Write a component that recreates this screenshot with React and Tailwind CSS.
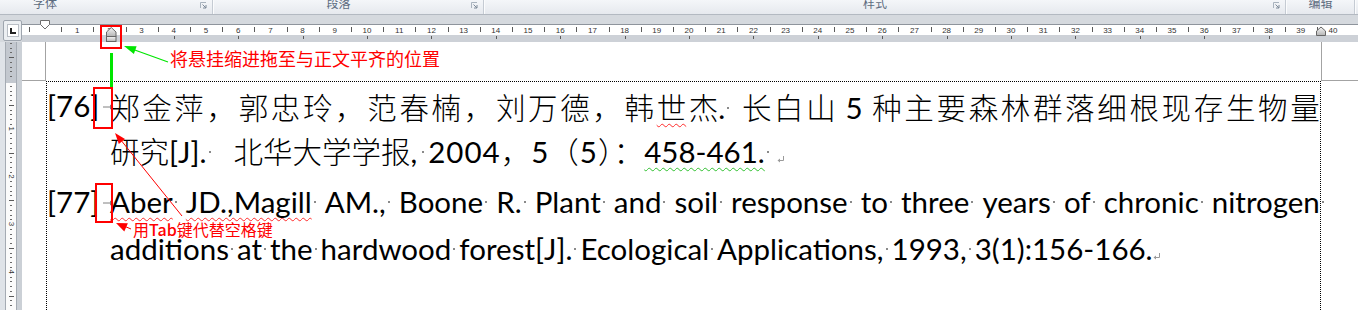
import React from 'react';

const CM = 32.2;
const Z = 23; // ruler-local x of the 0 mark
const CJK = "font-['Noto_Sans_CJK_SC',sans-serif] font-light";
const RED_WAVE = 'underline decoration-wavy decoration-[#ff2b2b] decoration-1 underline-offset-[4px] [text-decoration-skip-ink:none]';
const GREEN_WAVE = 'underline decoration-wavy decoration-[#2fbf2f] decoration-1 underline-offset-[4px] [text-decoration-skip-ink:none]';

function C({ children, className = '' }) {
  return <span className={`${CJK} ${className}`}>{children}</span>;
}

// formatting mark for a space
function Sp({ className = 'w-[8px] pl-[2px]' }) {
  return (
    <span className={`inline-flex ${className} align-[10px]`}>
      <span className="w-[2px] h-[2px] bg-[#8a8a8a]" />
    </span>
  );
}

function TabMark() {
  return (
    <svg width="11" height="6" viewBox="0 0 11 6" className="inline-block align-[7px] ml-[4px]">
      <path d="M0 3H8" stroke="#808080" strokeWidth="1" />
      <path d="M7 0.5L10.5 3L7 5.5Z" fill="#808080" />
    </svg>
  );
}

function Ret() {
  return (
    <svg width="8" height="7" viewBox="0 0 8 7" className="inline-block align-baseline">
      <path d="M6.5 0V4.5H1.5" fill="none" stroke="#9a9a9a" strokeWidth="1" />
      <path d="M0.5 4.5L3 2.5V6.5Z" fill="#9a9a9a" />
    </svg>
  );
}

function Launcher() {
  return (
    <svg width="7" height="7" viewBox="0 0 7 7" className="block">
      <path d="M0.5 6V0.5H6" fill="none" stroke="#a9b3be" />
      <path d="M2.5 2.5L6 6M6 3V6H3" fill="none" stroke="#7d8998" />
    </svg>
  );
}

function Sep() {
  return (
    <div className="flex h-full">
      <div className="w-px bg-[#c5cbd3]" />
      <div className="w-px bg-[#fbfcfd]" />
    </div>
  );
}

function Ribbon() {
  return (
    <div className={`h-[14px] flex overflow-hidden bg-linear-to-b from-[#f4f6f9] to-[#e6e9ee] text-[12px] leading-[12px] text-[#5d6c80] ${CJK} font-normal`}>
      <div className="w-[212px] flex">
        <div className="flex-1 pl-[33px]"><span className="block -mt-[3px]">字体</span></div>
        <div className="w-[20px] flex justify-end pr-[5px] pt-[2px]"><Launcher /></div>
      </div>
      <Sep />
      <div className="w-[269px] flex">
        <div className="flex-1 text-center"><span className="block -mt-[3px]">段落</span></div>
        <div className="w-[20px] flex justify-end pr-[5px] pt-[2px]"><Launcher /></div>
      </div>
      <Sep />
      <div className="w-[800px] flex">
        <div className="flex-1 text-center"><span className="block -mt-[3px]">样式</span></div>
        <div className="w-[20px] flex justify-end pr-[5px] pt-[2px]"><Launcher /></div>
      </div>
      <Sep />
      <div className="w-[67px] text-center"><span className="block -mt-[3px]">编辑</span></div>
      <Sep />
      <div className="flex-1" />
    </div>
  );
}

function HRuler() {
  const nums = Array.from({ length: 40 }, (_, i) => i + 1);
  const halves = Array.from({ length: 41 }, (_, i) => i - 1);
  const tabs = Array.from({ length: 18 }, (_, i) => 4 + i * 2);
  return (
    <svg width="1336" height="18" className="block overflow-visible">
      <defs>
        <linearGradient id="mk" x1="0" y1="0" x2="0" y2="1">
          <stop offset="0" stopColor="#f6f6f6" />
          <stop offset="1" stopColor="#b4b4b4" />
        </linearGradient>
      </defs>
      <rect x="0" y="0" width="1336" height="1" fill="#8e949c" />
      <rect x="0" y="1" width="1336" height="10" fill="#ffffff" />
      <rect x="0" y="11" width="1336" height="7" fill="#cdd1d7" />
      {halves.map((n) => (
        <rect key={n} x={Math.round(Z + CM * (n + 0.5))} y="3" width="1" height="5" fill="#5a5a5a" />
      ))}
      {tabs.map((n) => (
        <rect key={n} x={Math.round(Z + CM * n)} y="12" width="1" height="3" fill="#5a5a5a" />
      ))}
      {nums.map((n) => (
        <text key={n} x={Z + CM * n} y="8.5" textAnchor="middle" fontSize="8" fontFamily="Liberation Sans" fill="#333">
          {n}
        </text>
      ))}
      <polygon points="18.5,-3.5 27.5,-3.5 27.5,0.5 23,5 18.5,0.5" fill="#ffffff" stroke="#6e6e6e" />
      <polygon points="84.5,12.5 84.5,8 89.25,3.5 94,8 94,12.5" fill="url(#mk)" stroke="#666" />
      <rect x="84.5" y="12.5" width="9.5" height="5" fill="url(#mk)" stroke="#666" />
      <polygon points="1294.5,11.5 1294.5,7 1299,3 1303.5,7 1303.5,11.5" fill="url(#mk)" stroke="#666" />
    </svg>
  );
}

function VRuler() {
  const U = 47.7;
  const Y0 = 39;
  const ks = Array.from({ length: 57 }, (_, i) => i - 8);
  return (
    <svg width="12" height="268" className="block">
      <rect x="0" y="0" width="12" height="268" fill="#fbfbfb" />
      <rect x="0" y="0" width="12" height="41" fill="#c3c8cf" />
      <rect x="0" y="0" width="1" height="268" fill="#a5abb3" />
      <rect x="11" y="0" width="1" height="268" fill="#a5abb3" />
      {ks.map((k) => {
        const y = Y0 + (k * U) / 10;
        const m = ((k % 10) + 10) % 10;
        if (k === 0) return null;
        if (m === 0) {
          return (
            <text key={k} x="6" y={y} fontSize="8" fontFamily="Liberation Sans" fill="#333" textAnchor="middle" dominantBaseline="central" transform={`rotate(90 6 ${y})`}>
              {k / 10}
            </text>
          );
        }
        if (m === 5) return <rect key={k} x="4" y={Math.round(y)} width="5" height="1" fill="#5a5a5a" />;
        return <rect key={k} x="5" y={Math.round(y)} width="2" height="1" fill="#6a6a6a" />;
      })}
    </svg>
  );
}

const LINE1 = ['郑','金','萍','，','郭','忠','玲','，','范','春','楠','，','刘','万','德','，','韩','世','杰','长','白','山','5','种','主','要','森','林','群','落','细','根','现','存','生','物','量'];
const LINE3 = ['Aber','JD.,Magill','AM.,','Boone','R.','Plant','and','soil','response','to','three','years','of','chronic','nitrogen'];

function Line1() {
  return (
    <div className="flex justify-between items-baseline leading-[46px] whitespace-nowrap">
      {LINE1.map((ch, i) => {
        if (ch === '5') return <span key={i} className="px-[7px]">5</span>;
        if (ch === '世') return <C key={i} className={RED_WAVE}>世</C>;
        if (ch === '杰') return <span key={i}><C>杰</C>.<Sp className="w-[14px] pl-[2px]" /></span>;
        return <C key={i}>{ch}</C>;
      })}
    </div>
  );
}

function Line3() {
  return (
    <div className="flex justify-between items-baseline leading-[47px] whitespace-nowrap">
      {LINE3.map((w, i) => {
        const wave = i < 2 ? RED_WAVE : '';
        const last = i === LINE3.length - 1;
        return (
          <span key={i} className={last ? '-mr-[8px]' : ''}>
            <span className={wave}>{w}</span>
            <Sp />
          </span>
        );
      })}
    </div>
  );
}

function Page() {
  return (
    <div className="flex-1 flex flex-col bg-white">
      <div className="h-[39px] flex shrink-0">
        <div className="w-[24px] border-r border-b border-[#a3a3a3]" />
        <div className="w-[1275px]" />
        <div className="flex-1 border-l border-b border-[#a3a3a3]" />
      </div>
      <div className="ml-[24px] w-[1275px] flex-1 border-t border-l border-r border-dotted border-black pt-[1px] text-[29.5px] text-black font-['Lato','Noto_Sans_CJK_SC',sans-serif]">
        <div className="flex">
          <div className="w-[63px] leading-[46px] whitespace-nowrap">[76]<TabMark /></div>
          <div className="w-[1210px]">
            <Line1 />
            <div className="leading-[38px] whitespace-nowrap">
              <C>研究</C>[J].<Sp /><span className="inline-block w-[19px]" />
              <C>北华大学学报</C>,<Sp className="w-[11px] pl-[5px]" />
              <span className="tracking-[1px]">2004<C>，</C>5<C>（</C>5<C>）：</C></span>
              <span className={GREEN_WAVE}>458-461.</span>
              <Sp /><span className="inline-block w-[4px]" /><Ret />
            </div>
          </div>
        </div>
        <div className="flex mt-[7px]">
          <div className="w-[63px] leading-[47px] whitespace-nowrap">[77]<TabMark /></div>
          <div className="w-[1210px]">
            <Line3 />
            <div className="leading-[47px] whitespace-nowrap">
              additions<Sp />at<Sp />the<Sp />hardwood<Sp />forest[J].<Sp />Ecological<Sp />Applications,<Sp />1993,<Sp />3(1):156-166.<Ret />
            </div>
          </div>
        </div>
      </div>
    </div>
  );
}

function Annotations() {
  return (
    <div className="absolute inset-0 pointer-events-none">
      <div className="absolute left-[100px] top-[25px] w-[22px] h-[24px] border-2 border-[#ff0000]" />
      <div className="absolute left-[110px] top-[53px] w-[3px] h-[35px] bg-[#00e600]" />
      <div className="absolute left-[93px] top-[87px] w-[20px] h-[42px] border-2 border-[#ff0000]" />
      <div className="absolute left-[95px] top-[183px] w-[18px] h-[40px] border-2 border-[#ff0000]" />
      <svg width="1358" height="310" className="absolute inset-0">
        <line x1="168" y1="62" x2="132" y2="49" stroke="#00e600" strokeWidth="1.2" />
        <polygon points="124,46 136.6,46.3 133.9,53.9" fill="#00e600" />
        <line x1="182" y1="216" x2="120" y2="139" stroke="#ff0000" strokeWidth="1" />
        <polygon points="115,133 125,139.1 118.8,144.1" fill="#ff0000" />
        <line x1="131" y1="229" x2="124" y2="226" stroke="#ff0000" strokeWidth="1" />
        <polygon points="116,223 127.9,223.2 124.3,231.4" fill="#ff0000" />
      </svg>
      <div className={`absolute left-[170px] top-[48px] text-[18px] leading-[20px] text-[#ff0000] whitespace-nowrap ${CJK} font-normal`}>
        将悬挂缩进拖至与正文平齐的位置
      </div>
      <div className={`absolute left-[133px] top-[220px] text-[16px] leading-[18px] text-[#ff0000] whitespace-nowrap ${CJK} font-normal`}>
        用<span className="font-medium">Tab</span>键代替空格键
      </div>
    </div>
  );
}

export default function App() {
  return (
    <div className="relative w-[1358px] h-[310px] overflow-hidden bg-white">
      <Ribbon />
      <div className="h-[28px] flex border-t border-[#b3b9c1]">
        <div className="w-[22px] bg-[#d5d9de] pt-[5px] pl-[3px]">
          <div className="w-[19px] h-[21px] rounded-[2px] border border-[#9ea5ae] bg-[#eceff2] flex items-center justify-center">
            <div className="w-[12px] h-[13px] bg-white border border-[#b9bec5] flex items-center justify-center">
              <div className="w-[6px] h-[6px] border-l-2 border-b-2 border-[#222]" />
            </div>
          </div>
        </div>
        <div className="flex-1 flex flex-col">
          <div className="h-[9px] bg-[#d5d9de]" />
          <HRuler />
        </div>
      </div>
      <div className="h-[268px] flex">
        <div className="w-[22px] flex shrink-0">
          <div className="w-[5px] bg-[#dfe3e8]" />
          <VRuler />
          <div className="w-[5px] bg-[#cbd0d6]" />
        </div>
        <Page />
      </div>
      <Annotations />
    </div>
  );
}
